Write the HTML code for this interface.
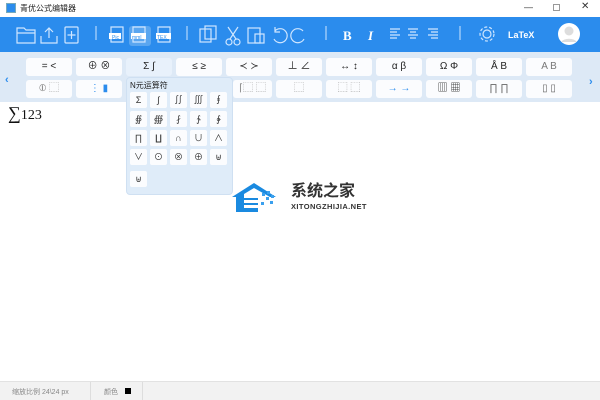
<!DOCTYPE html>
<html><head><meta charset="utf-8"><style>
*{margin:0;padding:0;box-sizing:border-box}
body{width:600px;height:400px;overflow:hidden;background:#fff;font-family:"Liberation Sans","Noto Sans CJK SC",sans-serif;position:relative}
.abs{position:absolute}
#title{left:0;top:0;width:600px;height:17px;background:#fff;font-size:8px;color:#222}
#tb{left:0;top:17px;width:600px;height:35px;background:#2b8ced}
#tb svg{position:absolute;left:0;top:0}
#pal{left:0;top:52px;width:600px;height:50px;background:#dde9f6}
.b{position:absolute;height:18px;width:46px;background:#fbfcfe;border-radius:3px;font-size:10px;color:#222;text-align:center;line-height:18px}
#pop{left:126px;top:77px;width:107px;height:118px;background:#dfecf9;border-radius:4px;border:1px solid #cfe0f2}
.c{position:absolute;width:17px;height:16px;background:#fbfcfe;border-radius:2px;font-size:9px;text-align:center;line-height:16px;color:#333}
#status{left:0;top:381px;width:600px;height:19px;background:#f2f2f2;border-top:1px solid #e2e2e2;font-size:7px;color:#888}
</style></head><body>
<div id="title" class="abs">
<div class="abs" style="left:6px;top:3px;width:10px;height:10px;background:#2b8ced;border:1px solid #7ab"></div>
<div class="abs" style="left:20px;top:3px">青优公式编辑器</div>
<div class="abs" style="top:2px;font-size:9px;color:#333;left:524px">—</div>
<div class="abs" style="left:553px;top:4px;width:7px;height:7px;border:1px solid #999"></div>
<div class="abs" style="left:581px;top:1px;font-size:10px;color:#333">✕</div>
</div>
<div id="tb" class="abs">
<svg width="600" height="35" fill="none" stroke="#cfe6ff" stroke-width="1.2">
<path d="M17 11h7l2 2h9v13H17z M17 16h18"/>
<path d="M41 19v7h16v-7 M49 11v10 M45 15l4-4 4 4"/>
<rect x="65" y="10" width="13" height="16" rx="1"/><path d="M71.5 14v8 M67.5 18h8"/>
<path d="M96 9v14" stroke-width="1"/>
<path d="M111 10h12v15h-12z"/><rect x="109" y="16" width="12" height="6" fill="#fff" stroke="none"/>
<rect x="129" y="9" width="22" height="20" rx="3" fill="#5aa6f0" stroke="none"/>
<path d="M133 10h12v15h-12z"/><rect x="131" y="16" width="15" height="6" fill="#fff" stroke="none"/>
<path d="M158 10h12v15h-12z"/><rect x="156" y="16" width="15" height="6" fill="#fff" stroke="none"/>
<path d="M187 9v14" stroke-width="1"/>
<rect x="200" y="12" width="11" height="13"/><rect x="205" y="9" width="11" height="13"/>
<circle cx="229" cy="25" r="3"/><circle cx="237" cy="25" r="3"/><path d="M230 22l8-12 M236 22l-8-12"/>
<rect x="248" y="11" width="12" height="15"/><rect x="255" y="17" width="9" height="9"/>
<path d="M275 14a7 7 0 1 1 -1 8 M275 10v5h5"/>
<path d="M303 14a7 7 0 1 0 1 8"/>
<path d="M326 9v14" stroke-width="1"/>
<path d="M390 12h10 M390 15h7 M390 18h10 M390 21h7"/>
<path d="M408 12h10 M410 15h6 M408 18h10 M410 21h6"/>
<path d="M428 12h10 M431 15h7 M428 18h10 M431 21h7"/>
<path d="M460 9v14" stroke-width="1"/>
<circle cx="487" cy="17" r="4"/><circle cx="487" cy="17" r="7" stroke-dasharray="3 2"/>
<circle cx="569" cy="17" r="11" fill="#fff" stroke="none"/>
<circle cx="569" cy="14" r="4.5" fill="#ddd" stroke="none"/>
<path d="M561 25a9 6 0 0 1 16 0z" fill="#ddd" stroke="none"/>
<text x="112" y="22" font-size="5" fill="#2b8ced" stroke="none">Pic</text>
<text x="132" y="22" font-size="5" fill="#2b8ced" stroke="none">mml</text>
<text x="157" y="22" font-size="5" fill="#2b8ced" stroke="none">TEX</text>
<text x="343" y="23" font-size="13" font-weight="bold" font-family="Liberation Serif" fill="#fff" stroke="none">B</text>
<text x="368" y="23" font-size="13" font-style="italic" font-weight="bold" font-family="Liberation Serif" fill="#fff" stroke="none">I</text>
<text x="508" y="21" font-size="9" fill="#fff" stroke="none" font-weight="bold">LaTeX</text>
</svg>
</div>
<div id="pal" class="abs">
<div class="abs" style="left:5px;top:22px;font-size:11px;font-weight:bold;color:#2b8ced">‹</div>
<div class="abs" style="left:589px;top:24px;font-size:11px;font-weight:bold;color:#2b8ced">›</div>
<div class="b" style="left:26px;top:6px">= &lt;</div>
<div class="b" style="left:76px;top:6px">⊕ ⊗</div>
<div class="b" style="left:126px;top:6px;background:#e8f1fb">Σ ∫</div>
<div class="b" style="left:176px;top:6px">≤ ≥</div>
<div class="b" style="left:226px;top:6px">≺ ≻</div>
<div class="b" style="left:276px;top:6px">⊥ ∠</div>
<div class="b" style="left:326px;top:6px">↔ ↕</div>
<div class="b" style="left:376px;top:6px">α β</div>
<div class="b" style="left:426px;top:6px">Ω Φ</div>
<div class="b" style="left:476px;top:6px">Å B</div>
<div class="b" style="left:526px;top:6px;color:#777">A B</div>
<div class="b" style="left:26px;top:28px;color:#888">⦶ ⬚</div>
<div class="b" style="left:76px;top:28px;color:#2b8ced">⋮ ▮</div>
<div class="b" style="left:233px;top:28px;width:39px;color:#888">⌈⬚ ⬚</div>
<div class="b" style="left:276px;top:28px;color:#888">⬚</div>
<div class="b" style="left:326px;top:28px;color:#888">⬚ ⬚</div>
<div class="b" style="left:376px;top:28px;color:#2b8ced">→ →</div>
<div class="b" style="left:426px;top:28px">▥ ▦</div>
<div class="b" style="left:476px;top:28px;color:#666">∏ ∏</div>
<div class="b" style="left:526px;top:28px;color:#666">▯ ▯</div>
</div>
<div class="abs" style="left:8px;top:103px;font-family:'Liberation Serif',serif;font-size:18px;color:#111">∑<span style="font-size:14px">123</span></div>
<div id="pop" class="abs">
<div class="abs" style="left:3px;top:2px;font-size:8px;color:#222">N元运算符</div>
<div class="c" style="left:3px;top:14px">Σ</div><div class="c" style="left:23px;top:14px">∫</div><div class="c" style="left:43px;top:14px">∬</div><div class="c" style="left:63px;top:14px">∭</div><div class="c" style="left:83px;top:14px">∮</div>
<div class="c" style="left:3px;top:33px">∯</div><div class="c" style="left:23px;top:33px">∰</div><div class="c" style="left:43px;top:33px">⨏</div><div class="c" style="left:63px;top:33px">∱</div><div class="c" style="left:83px;top:33px">∳</div>
<div class="c" style="left:3px;top:52px">∏</div><div class="c" style="left:23px;top:52px">∐</div><div class="c" style="left:43px;top:52px">∩</div><div class="c" style="left:63px;top:52px">∪</div><div class="c" style="left:83px;top:52px">∧</div>
<div class="c" style="left:3px;top:71px">∨</div><div class="c" style="left:23px;top:71px">⊙</div><div class="c" style="left:43px;top:71px">⊗</div><div class="c" style="left:63px;top:71px">⊕</div><div class="c" style="left:83px;top:71px">⊎</div>
<div class="c" style="left:3px;top:93px">⊎</div>
</div>
<svg class="abs" style="left:230px;top:175px" width="70" height="45">
<path d="M2 22l22-14 22 14h-6l-16-9-10 6v14h14v4H6V22z" fill="#1a8ae0"/>
<path d="M14 24h14 M14 29h14" stroke="#1a8ae0" stroke-width="2"/>
<g fill="#3aa0ee"><rect x="32" y="18" width="3" height="3"/><rect x="37" y="16" width="3" height="3"/><rect x="36" y="22" width="3" height="3"/><rect x="41" y="20" width="3" height="3"/><rect x="31" y="27" width="3" height="3"/><rect x="40" y="26" width="3" height="3"/></g>
</svg>
<div class="abs" style="left:291px;top:177px;font-size:16px;font-weight:bold;color:#333">系统之家</div>
<div class="abs" style="left:291px;top:202px;font-size:7.5px;font-weight:bold;color:#333;letter-spacing:0.4px">XITONGZHIJIA.NET</div>
<div id="status" class="abs">
<div class="abs" style="left:12px;top:5px">缩放比例 24\24 px</div>
<div class="abs" style="left:90px;top:0;width:1px;height:18px;background:#ddd"></div>
<div class="abs" style="left:104px;top:5px">颜色</div>
<div class="abs" style="left:125px;top:6px;width:6px;height:6px;background:#000"></div>
<div class="abs" style="left:142px;top:0;width:1px;height:18px;background:#ddd"></div>
</div>
</body></html>
